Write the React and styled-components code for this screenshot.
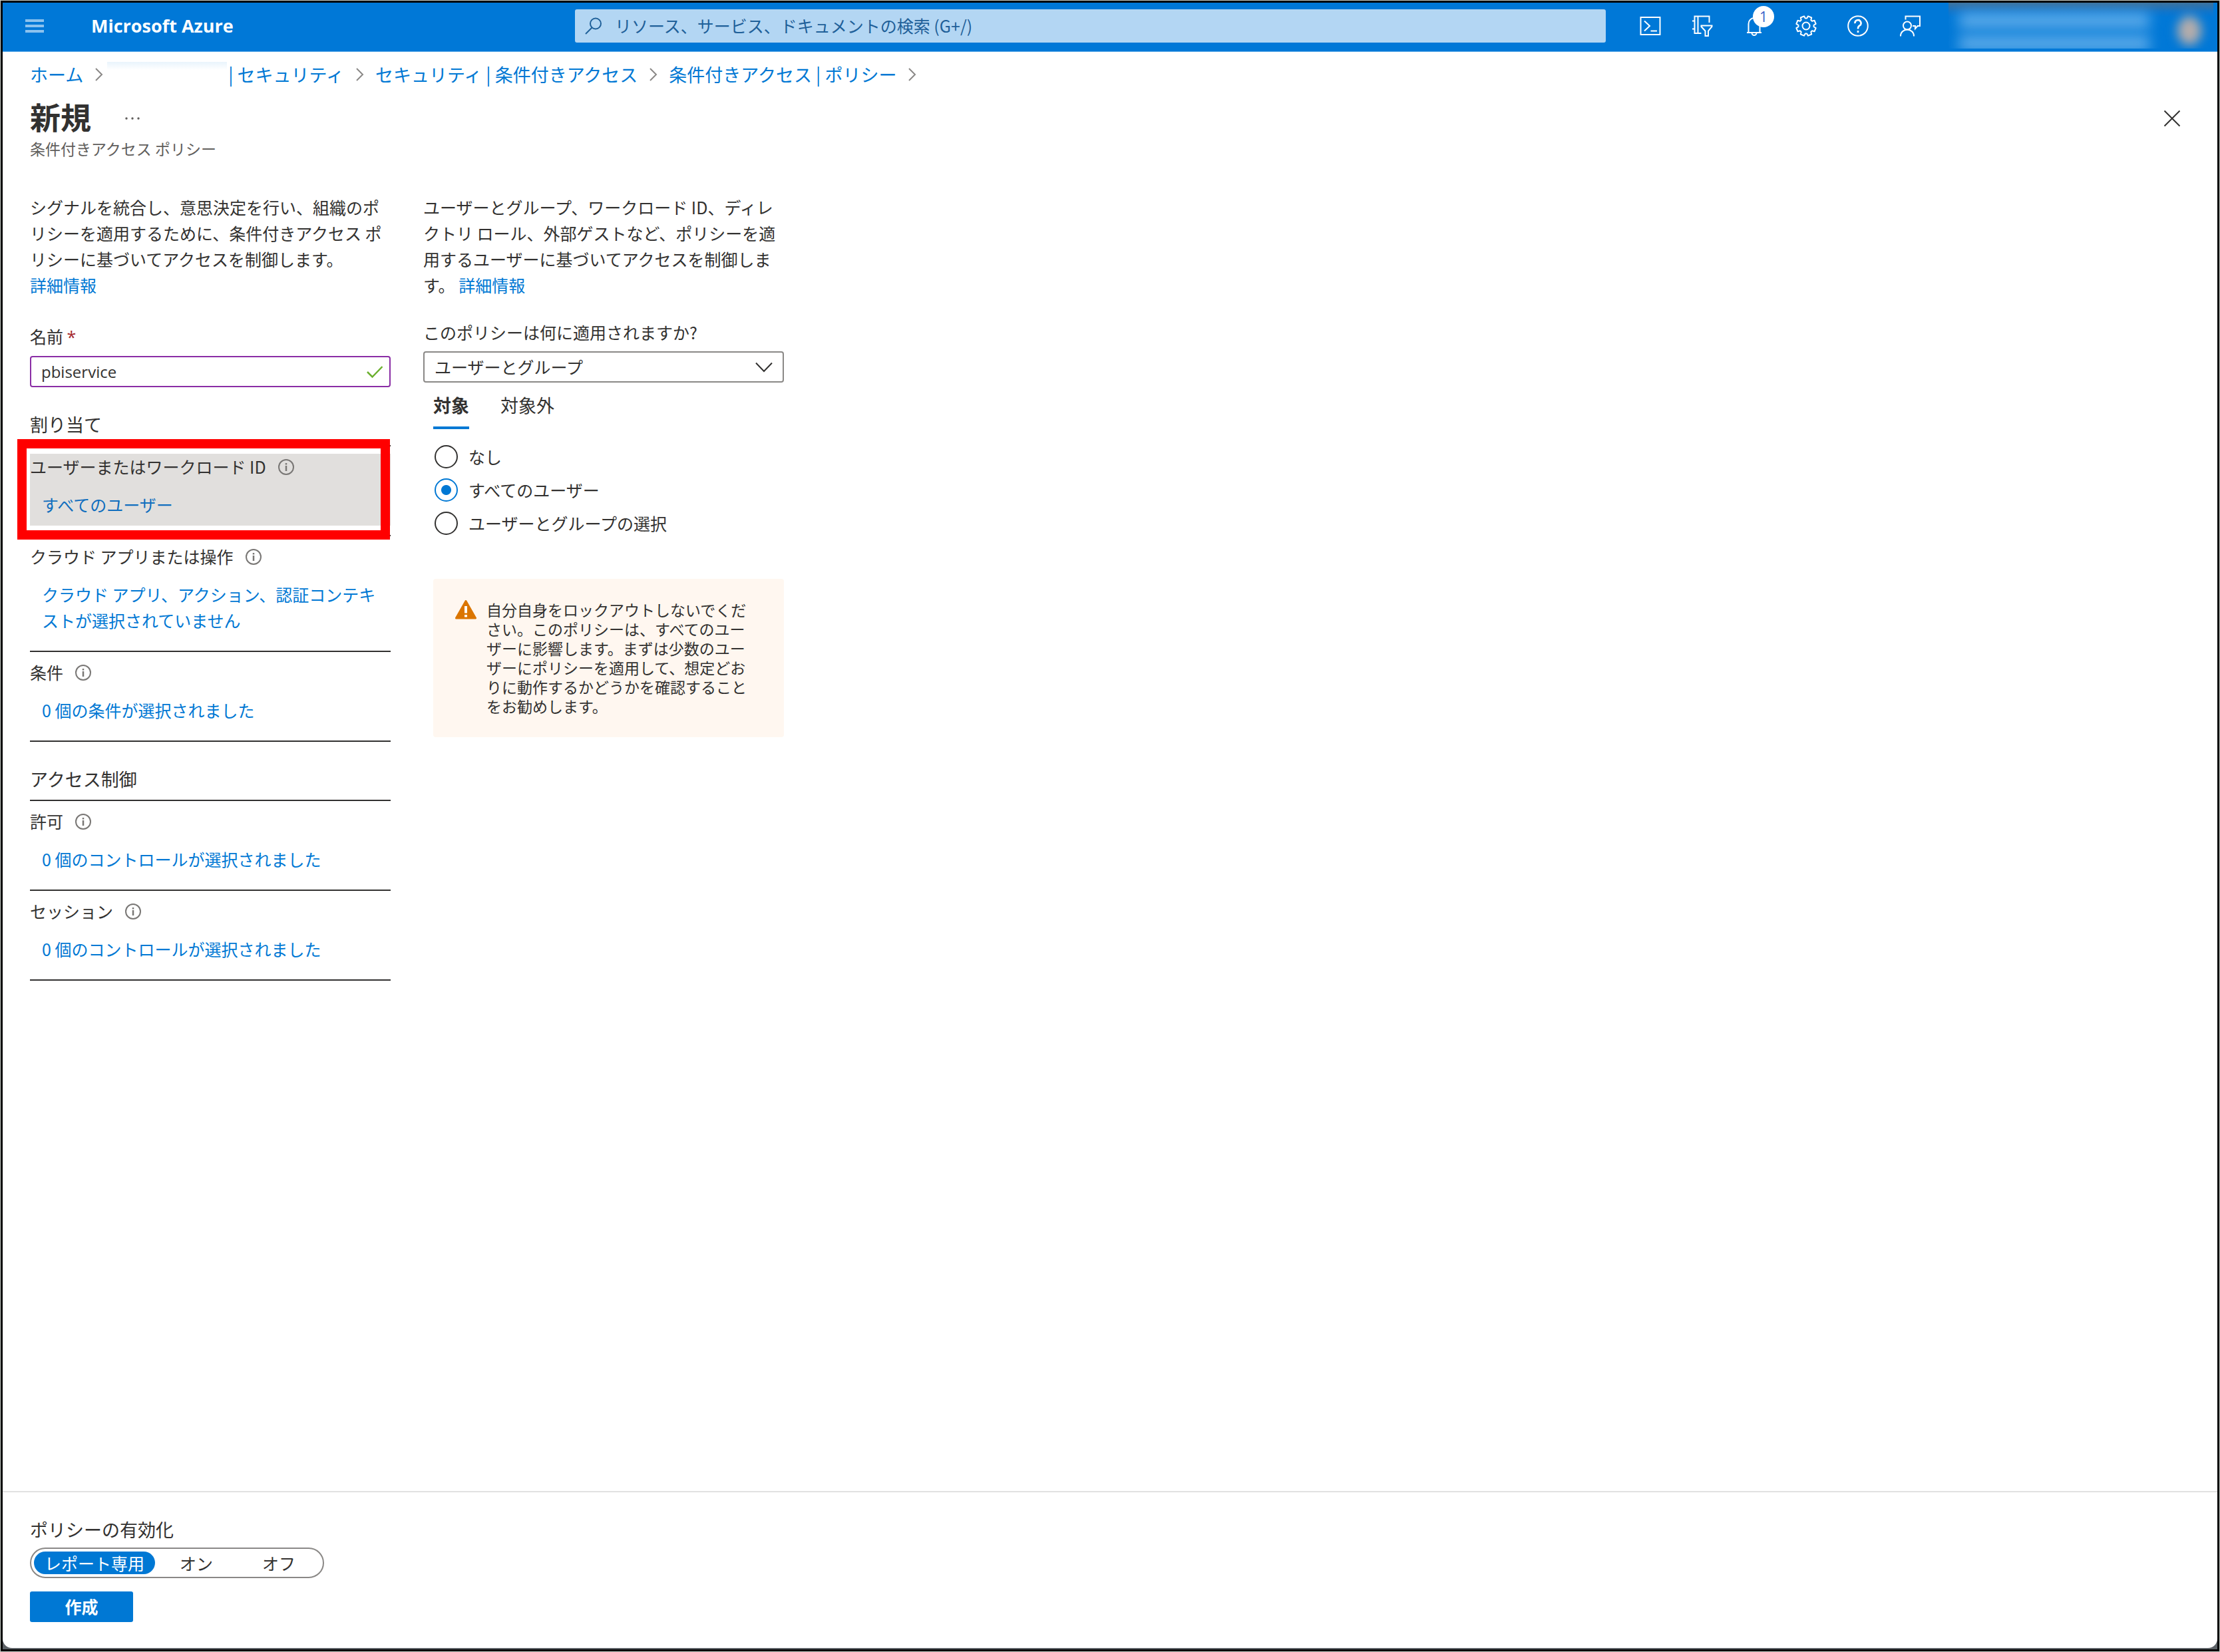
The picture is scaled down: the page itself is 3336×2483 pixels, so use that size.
import React, { useState } from "react";
import styled, { createGlobalStyle, css } from "styled-components";

const cjk = `"Noto Sans CJK JP", "Noto Sans", sans-serif`;
const latin = `"Open Sans", "Noto Sans CJK JP", sans-serif`;

const GlobalStyle = createGlobalStyle`
  *, *::before, *::after { box-sizing: border-box; }
  body {
    margin: 0;
    background: #c9cec9;
    color: #323130;
    font: 400 25px/39px ${cjk};
  }
  button, input, select { font: inherit; color: inherit; margin: 0; }
  button { cursor: pointer; }
  svg { display: block; flex: none; }
`;

/* ---------- window frame ---------- */

const Frame = styled.div`
  min-height: 100vh;
  padding: 1px;
  display: flex;
`;

const Bezel = styled.div`
  flex: 1;
  min-width: 0;
  display: flex;
  border: 3px solid #000;
  padding-bottom: 2px;
  background: #5c6166;
`;

const Window = styled.div`
  flex: 1;
  min-width: 0;
  display: flex;
  flex-direction: column;
  background: #fff;
  border-radius: 0 0 14px 14px;
`;

/* ---------- top bar ---------- */

const TopBar = styled.header`
  height: 74px;
  padding-bottom: 4px;
  display: flex;
  align-items: center;
  background: #0078d7;
  border-bottom: 1px solid #5ba9e6;
  color: #fff;
`;

const BrandArea = styled.div`
  width: 860px;
  padding-left: 19px;
  display: flex;
  align-items: center;
  gap: 56px;
`;

const BareButton = styled.button`
  padding: 0;
  border: 0;
  background: none;
  display: flex;
  align-items: center;
  justify-content: center;
`;

const MenuButton = styled(BareButton)`
  width: 58px;
  height: 58px;
`;

const Brand = styled.a`
  color: #fff;
  text-decoration: none;
  font: 700 27px/39px ${latin};
`;

const SearchBox = styled.label`
  flex: 1;
  min-width: 0;
  height: 50px;
  padding: 0 15px;
  display: flex;
  align-items: center;
  gap: 19px;
  border-radius: 3px;
  background: #b3d6f3;
  color: #1f6099;
`;

const SearchInput = styled.input`
  flex: 1;
  min-width: 0;
  padding: 0;
  border: 0;
  outline: 0;
  background: none;
  &::placeholder { color: #1f6099; opacity: 1; }
`;

const Tools = styled.nav`
  display: flex;
  margin: 0 19px 0 28px;
`;

const ToolButton = styled(BareButton)`
  position: relative;
  width: 78px;
  height: 69px;
`;

const Badge = styled.span`
  position: absolute;
  top: 5px;
  left: 37px;
  width: 32px;
  height: 32px;
  border-radius: 50%;
  background: #fff;
  color: #3a5fc8;
  font: 400 21px/32px ${latin};
  text-align: center;
`;

const Account = styled.div`
  width: 398px;
  height: 69px;
  margin-right: 6px;
  padding: 0 18px 0 16px;
  display: flex;
  align-items: flex-start;
  justify-content: space-between;
  overflow: hidden;
  background: linear-gradient(#3d729c, #0f75cc 14px, #0078d7 22px);
`;

const AccountLines = styled.div`
  display: flex;
  flex-direction: column;
  gap: 12px;
  padding-top: 16px;
`;

const AccountLine = styled.span`
  width: 286px;
  height: 22px;
  background: #62aeea;
  filter: blur(10px);
`;

const Avatar = styled.span`
  width: 36px;
  height: 44px;
  margin-top: 20px;
  border-radius: 50%;
  background: #b5adab;
  filter: blur(8px);
`;

/* ---------- page head ---------- */

const Page = styled.main`
  flex: 1;
  padding: 14px 41px 0;
`;

const Breadcrumb = styled.nav`
  display: flex;
  align-items: center;
  gap: 17px;
  font-size: 27px;
`;

const Link = styled.a`
  color: #0078d4;
  text-decoration: none;
  white-space: nowrap;
`;

const Tenant = styled.span`
  display: flex;
  align-items: center;
  gap: 2px;
  margin-left: -11px;
`;

const Redacted = styled.span`
  width: 180px;
  height: 38px;
  background: linear-gradient(#e9f4fc, #fff 12px);
`;

const TitleRow = styled.div`
  height: 60px;
  display: flex;
  align-items: center;
  gap: 50px;
  margin-top: 17px;
  padding-right: 7px;
`;

const Title = styled.h1`
  align-self: flex-start;
  margin: 0;
  font-size: 46px;
  line-height: 52px;
  font-weight: 700;
`;

const CloseButton = styled(BareButton)`
  width: 40px;
  height: 40px;
  margin-left: auto;
`;

const Subtitle = styled.p`
  margin: 0;
  color: #605e5c;
  font-size: 23px;
  line-height: 30px;
`;

/* ---------- columns ---------- */

const Columns = styled.div`
  display: flex;
  gap: 49px;
  margin-top: 54px;
`;

const Column = styled.section`
  width: 542px;
`;

const Intro = styled.p`
  margin: 0;
`;

const FieldLabel = styled.label`
  display: block;
  margin: ${(p) => p.$top}px 0 9px;
`;

const Required = styled.span`
  color: #a4262c;
  font-family: ${latin};
`;

const Control = styled.div`
  height: 47px;
  display: flex;
  align-items: center;
  border: 2px solid ${(p) => p.$color};
  border-radius: 4px;
  padding-right: ${(p) => p.$end}px;
`;

const fieldReset = css`
  flex: 1;
  min-width: 0;
  height: 43px;
  padding: 0 0 0 15px;
  border: 0;
  outline: 0;
  background: none;
  appearance: none;
`;

const NameInput = styled.input`
  ${fieldReset}
  font: 400 24px/39px ${latin};
`;

const Select = styled.select`
  ${fieldReset}
`;

const GroupTitle = styled.h2`
  margin: 36px 0 12px;
  font-size: 27px;
  line-height: 39px;
  font-weight: 400;
`;

const Group = styled.div`
  border-top: 2px solid #323130;
`;

const Setting = styled.div`
  padding: 11px 0 14px;
  border-bottom: 2px solid #323130;
`;

const SettingBody = styled.div`
  position: relative;
  padding-bottom: 12px;
  background: ${(p) => (p.$active ? "#e1dfdd" : "none")};
`;

const Highlight = styled.span`
  position: absolute;
  inset: -22px 1px -21px -19px;
  border: 14px solid #f00;
  pointer-events: none;
  z-index: 1;
`;

const SettingName = styled.div`
  display: flex;
  align-items: center;
  gap: 18px;
`;

const SettingLink = styled(Link)`
  display: block;
  margin-top: 18px;
  padding-left: 18px;
  white-space: normal;
  color: ${(p) => (p.$active ? "#106ebe" : "#0078d4")};
`;

const Targets = styled.div`
  padding-left: 15px;
`;

const Tabs = styled.div`
  display: flex;
  gap: 47px;
  margin: 14px 0 16px;
`;

const Tab = styled.button`
  padding: 0 0 13px;
  border: 0;
  border-bottom: 4px solid ${(p) => (p.$on ? "#0078d4" : "transparent")};
  background: none;
  font-size: 27px;
  line-height: 39px;
  font-weight: ${(p) => (p.$on ? 700 : 400)};
`;

const RadioRow = styled.label`
  height: 50px;
  padding-left: 2px;
  display: flex;
  align-items: center;
  gap: 16px;
`;

const Radio = styled.input`
  appearance: none;
  width: 35px;
  height: 35px;
  border: 2px solid #323130;
  border-radius: 50%;
  &:checked {
    border-color: #0078d4;
    background: radial-gradient(circle, #0078d4 7px, transparent 8px);
  }
`;

const Warning = styled.div`
  display: flex;
  align-items: flex-start;
  gap: 15px;
  margin-top: 59px;
  padding: 32px 40px 32px 33px;
  border-radius: 4px;
  background: #fff7f0;
  font-size: 23px;
  line-height: 29px;
`;

/* ---------- footer ---------- */

const Footer = styled.footer`
  padding: 36px 41px 39px;
  border-top: 2px solid #e1e1e1;
`;

const ToggleSet = styled.fieldset`
  margin: 0;
  padding: 0;
  border: 0;
`;

const ToggleTitle = styled.legend`
  padding: 0;
  font-size: 27px;
`;

const Toggle = styled.div`
  width: 442px;
  height: 46px;
  margin-top: 8px;
  padding: 4px;
  display: flex;
  border: 2px solid #8a8886;
  border-radius: 23px;
`;

const ToggleOption = styled.label`
  width: ${(p) => (p.$wide ? 182 : 124)}px;
  border-radius: 17px;
  text-align: center;
  line-height: 34px;
  background: ${(p) => (p.$on ? "#0078d4" : "none")};
  color: ${(p) => (p.$on ? "#fff" : "inherit")};
`;

const HiddenRadio = styled.input`
  appearance: none;
  position: absolute;
  width: 0;
  height: 0;
`;

const CreateButton = styled.button`
  width: 155px;
  height: 46px;
  margin-top: 20px;
  padding: 0 0 2px;
  border: 0;
  border-radius: 3px;
  background: #0078d4;
  color: #fff;
  font-weight: 700;
`;

/* ---------- icons ---------- */

const Icon = ({ w = 32, h = w, sw = 2, color = "currentColor", children }) => (
  <svg width={w} height={h} viewBox={`0 0 ${w} ${h}`} fill="none" stroke={color} strokeWidth={sw} aria-hidden="true">
    {children}
  </svg>
);

const gearPath = (() => {
  const pts = [];
  for (let i = 0; i < 8; i++) {
    const a = (i * Math.PI) / 4 - Math.PI / 2 + Math.PI / 8;
    [[-0.29, 11.6], [-0.19, 15], [0.19, 15], [0.29, 11.6]].forEach(([d, r]) => {
      pts.push(`${(16 + r * Math.cos(a + d)).toFixed(2)} ${(16 + r * Math.sin(a + d)).toFixed(2)}`);
    });
  }
  return `M${pts.join("L")}Z`;
})();

const MenuIcon = () => (
  <Icon w={28} h={20} sw={4} color="#8cc2ee"><path d="M0 2H28M0 10H28M0 18H28" /></Icon>
);
const SearchIcon = () => (
  <Icon w={26}><circle cx="16" cy="9.5" r="8" /><path d="M10.5 15.5L1 25" /></Icon>
);
const ShellIcon = () => (
  <Icon><path d="M1.5 3H30.5V29H1.5Z" /><path d="M7 8.5L15 16L7 23.5M16.5 23.5H26" /></Icon>
);
const FilterIcon = () => (
  <Icon>
    <path d="M14.5 27H4.5V1.5H26.5V11M9.5 1.5V27M1 8.5H4.5M1 20.5H4.5" />
    <path d="M14.5 15.5H30.5V17L25 23.5V31H20.5V23.5L14.5 17Z" />
  </Icon>
);
const BellIcon = () => (
  <Icon><path d="M5 26H27M7.5 26V13A8.5 9 0 0 1 24.5 13V26M12.5 26.5A3.5 3.5 0 0 0 19.5 26.5" /></Icon>
);
const GearIcon = () => (
  <Icon><path d={gearPath} strokeLinejoin="round" /><circle cx="16" cy="16" r="5.5" /></Icon>
);
const HelpIcon = () => (
  <Icon>
    <circle cx="16" cy="16" r="14.8" />
    <path d="M11.5 12.2A4.5 4.5 0 1 1 18.2 15.6Q16 17 16 20V20.5M16 23V26" strokeWidth="2.6" />
  </Icon>
);
const FeedbackIcon = () => (
  <Icon>
    <path d="M9.5 6.5V1.5H31V16H27.5L24 20V16H20" />
    <circle cx="12" cy="15.5" r="6" />
    <path d="M2 31.5V31A10 9.5 0 0 1 22 31V31.5" />
  </Icon>
);
const ChevronRight = () => (
  <Icon w={13} h={20} color="#8a8886"><path d="M2 1L11 10L2 19" /></Icon>
);
const ChevronDown = () => (
  <Icon w={28} h={16}><path d="M2 1.5L14 14L26 1.5" /></Icon>
);
const CloseIcon = () => (
  <Icon w={26}><path d="M1.5 1.5L24.5 24.5M24.5 1.5L1.5 24.5" /></Icon>
);
const CheckIcon = () => (
  <Icon w={26} h={20} color="#6bb02e"><path d="M2 10L9.5 17.5L24.5 2" strokeWidth="2.5" /></Icon>
);
const MoreIcon = () => (
  <svg width="24" height="6" viewBox="0 0 24 6" fill="#605e5c" aria-hidden="true">
    <circle cx="3" cy="3" r="1.7" /><circle cx="12" cy="3" r="1.7" /><circle cx="21" cy="3" r="1.7" />
  </svg>
);
const InfoIcon = () => (
  <Icon w={24} color="#797775">
    <circle cx="12" cy="12" r="11" />
    <path d="M12 10V18M12 6V8.5" strokeWidth="2.5" />
  </Icon>
);
const WarningIcon = () => (
  <svg width="32" height="29" viewBox="0 0 32 29" aria-hidden="true">
    <path d="M16 1.5L30.5 27H1.5Z" fill="#db7500" stroke="#db7500" strokeWidth="3" strokeLinejoin="round" />
    <path d="M16 9V19.500M16 22V25.500" stroke="#fff" strokeWidth="4" />
  </svg>
);

/* ---------- parts ---------- */

function SettingRow({ name, value, active }) {
  return (
    <Setting>
      <SettingBody $active={active}>
        <SettingName>{name}<InfoIcon /></SettingName>
        <SettingLink href="#" $active={active}>{value}</SettingLink>
        {active && <Highlight />}
      </SettingBody>
    </Setting>
  );
}

const tools = [
  ["Cloud Shell", ShellIcon],
  ["ディレクトリとサブスクリプション", FilterIcon],
  ["通知", BellIcon, 1],
  ["設定", GearIcon],
  ["ヘルプ", HelpIcon],
  ["フィードバック", FeedbackIcon],
];

const targets = ["なし", "すべてのユーザー", "ユーザーとグループの選択"];
const modes = ["レポート専用", "オン", "オフ"];

export default function App() {
  const [tab, setTab] = useState("対象");
  const [target, setTarget] = useState(targets[1]);
  const [mode, setMode] = useState(modes[0]);

  return (
    <Frame>
      <GlobalStyle />
      <Bezel>
        <Window>
          <TopBar>
            <BrandArea>
              <MenuButton aria-label="メニュー"><MenuIcon /></MenuButton>
              <Brand href="#">Microsoft Azure</Brand>
            </BrandArea>
            <SearchBox>
              <SearchIcon />
              <SearchInput aria-label="検索" placeholder="リソース、サービス、ドキュメントの検索 (G+/)" />
            </SearchBox>
            <Tools>
              {tools.map(([label, Glyph, count]) => (
                <ToolButton key={label} aria-label={label}>
                  <Glyph />
                  {count && <Badge>{count}</Badge>}
                </ToolButton>
              ))}
            </Tools>
            <Account>
              <AccountLines><AccountLine /><AccountLine /></AccountLines>
              <Avatar />
            </Account>
          </TopBar>

          <Page>
            <Breadcrumb>
              <Link href="#">ホーム</Link>
              <ChevronRight />
              <Tenant><Redacted /><Link href="#">| セキュリティ</Link></Tenant>
              <ChevronRight />
              <Link href="#">セキュリティ | 条件付きアクセス</Link>
              <ChevronRight />
              <Link href="#">条件付きアクセス | ポリシー</Link>
              <ChevronRight />
            </Breadcrumb>
            <TitleRow>
              <Title>新規</Title>
              <BareButton aria-label="その他"><MoreIcon /></BareButton>
              <CloseButton aria-label="閉じる"><CloseIcon /></CloseButton>
            </TitleRow>
            <Subtitle>条件付きアクセス ポリシー</Subtitle>

            <Columns>
              <Column>
                <Intro>
                  シグナルを統合し、意思決定を行い、組織のポリシーを適用するために、条件付きアクセス ポリシーに基づいてアクセスを制御します。{" "}
                  <Link href="#">詳細情報</Link>
                </Intro>
                <FieldLabel htmlFor="policy-name" $top={38}>名前 <Required>*</Required></FieldLabel>
                <Control $color="#8a2da5" $end={9}>
                  <NameInput id="policy-name" defaultValue="pbiservice" />
                  <CheckIcon />
                </Control>

                <GroupTitle>割り当て</GroupTitle>
                <Group>
                  <SettingRow name="ユーザーまたはワークロード ID" value="すべてのユーザー" active />
                  <SettingRow name="クラウド アプリまたは操作" value="クラウド アプリ、アクション、認証コンテキストが選択されていません" />
                  <SettingRow name="条件" value="0 個の条件が選択されました" />
                </Group>

                <GroupTitle>アクセス制御</GroupTitle>
                <Group>
                  <SettingRow name="許可" value="0 個のコントロールが選択されました" />
                  <SettingRow name="セッション" value="0 個のコントロールが選択されました" />
                </Group>
              </Column>

              <Column>
                <Intro>
                  ユーザーとグループ、ワークロード ID、ディレクトリ ロール、外部ゲストなど、ポリシーを適用するユーザーに基づいてアクセスを制御します。{" "}
                  <Link href="#">詳細情報</Link>
                </Intro>
                <FieldLabel htmlFor="applies-to" $top={32}>このポリシーは何に適用されますか?</FieldLabel>
                <Control $color="#8a8886" $end={14}>
                  <Select id="applies-to"><option>ユーザーとグループ</option></Select>
                  <ChevronDown />
                </Control>
                <Targets>
                  <Tabs role="tablist">
                    {["対象", "対象外"].map((t) => (
                      <Tab key={t} role="tab" aria-selected={t === tab} $on={t === tab} onClick={() => setTab(t)}>{t}</Tab>
                    ))}
                  </Tabs>
                  {targets.map((t) => (
                    <RadioRow key={t}>
                      <Radio type="radio" name="target" checked={t === target} onChange={() => setTarget(t)} />
                      {t}
                    </RadioRow>
                  ))}
                  <Warning>
                    <WarningIcon />
                    <span>自分自身をロックアウトしないでください。このポリシーは、すべてのユーザーに影響します。まずは少数のユーザーにポリシーを適用して、想定どおりに動作するかどうかを確認することをお勧めします。</span>
                  </Warning>
                </Targets>
              </Column>
            </Columns>
          </Page>

          <Footer>
            <ToggleSet>
              <ToggleTitle>ポリシーの有効化</ToggleTitle>
              <Toggle>
                {modes.map((m, i) => (
                  <ToggleOption key={m} $wide={i === 0} $on={m === mode}>
                    <HiddenRadio type="radio" name="mode" checked={m === mode} onChange={() => setMode(m)} />
                    {m}
                  </ToggleOption>
                ))}
              </Toggle>
            </ToggleSet>
            <CreateButton>作成</CreateButton>
          </Footer>
        </Window>
      </Bezel>
    </Frame>
  );
}
